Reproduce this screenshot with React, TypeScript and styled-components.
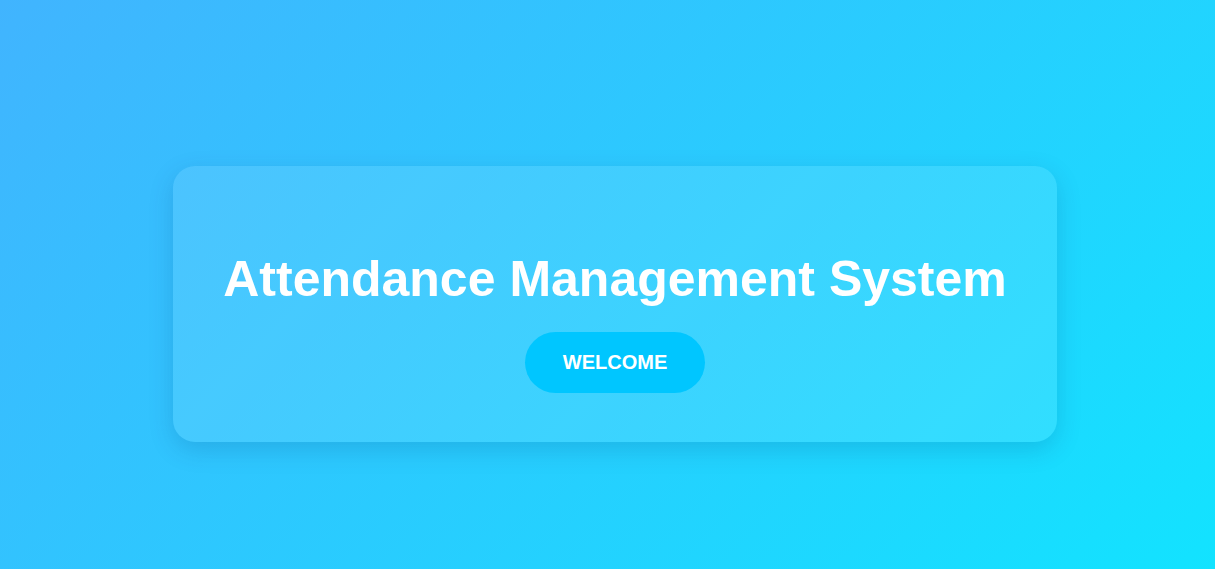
import React from "react";
import styled, { createGlobalStyle } from "styled-components";

const Global = createGlobalStyle`
  html, body { margin: 0; padding: 0; }
  body {
    font-family: "Liberation Sans", Arial, sans-serif;
    background: linear-gradient(135deg, #41b4fe 0%, #12e3ff 100%);
    min-height: 100vh;
  }
`;

const Page = styled.div`
  min-height: 100vh;
  box-sizing: border-box;
  display: flex;
  justify-content: center;
  align-items: flex-start;
  padding: 166px 0 0 15px;
`;

const Card = styled.div`
  box-sizing: border-box;
  width: 884px;
  height: 276px;
  padding: 0 40px 49px;
  border-radius: 22px;
  background: rgba(255, 255, 255, 0.1);
  box-shadow: 0 8px 24px rgba(0, 60, 120, 0.18);
  display: flex;
  flex-direction: column;
  align-items: center;
  justify-content: flex-end;
`;

const Title = styled.h1`
  margin: 0 0 23px;
  color: #ffffff;
  font-size: 50px;
  font-weight: 700;
  line-height: 1.2;
  white-space: nowrap;
`;

const Button = styled.button`
  font-family: "Liberation Sans", Arial, sans-serif;
  border: none;
  background: #00c6ff;
  color: #ffffff;
  font-size: 20px;
  font-weight: 700;
  width: 180px;
  height: 61px;
  border-radius: 31px;
  cursor: pointer;
`;

export default function App() {
  return (
    <>
      <Global />
      <Page>
        <Card>
          <Title>Attendance Management System</Title>
          <Button>WELCOME</Button>
        </Card>
      </Page>
    </>
  );
}
